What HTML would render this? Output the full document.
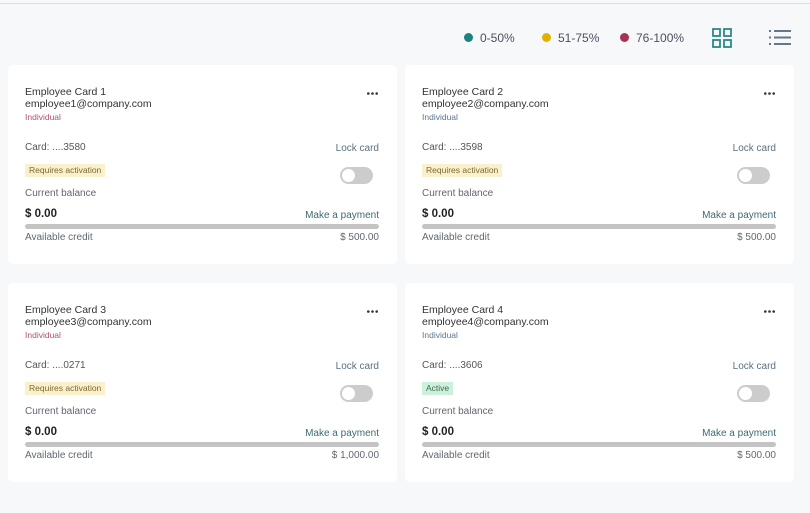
<!DOCTYPE html>
<html><head><style>
body{margin:0;width:810px;height:513px;background:#f7f8fa;font-family:"Liberation Sans",sans-serif;position:relative;overflow:hidden}
.top{position:absolute;left:0;top:3px;width:810px;height:1px;background:#dcdfe3}
.leg{position:absolute;top:31px;font-size:12px;color:#4a5060}
.dot{position:absolute;top:33px;width:9px;height:9px;border-radius:50%}
.card{position:absolute;width:389px;height:199px;background:#fff;border-radius:5px}
.card div{position:absolute;white-space:nowrap}
.t{left:17px;top:21px;font-size:10.5px;color:#333;line-height:12px}
.e{left:17px;top:33px;font-size:10.5px;color:#333}
.i{left:17px;top:47px;font-size:8.5px;color:#b0526e}
.c{left:17px;top:77px;font-size:10px;color:#555}
.l{right:18px;top:78px;font-size:10px;color:#5b7180}
.b{left:17px;top:99px;height:13px;padding:0 4px;font-size:8.5px;line-height:13px;color:#7a6a30;background:#fbf0cc}
.b.a{background:#cdf0dc;color:#3d6b4e}
.tg{left:332px;top:102px;width:33px;height:17px;border-radius:9px;background:#ccc}
.tg::after{content:"";position:absolute;left:2px;top:2px;width:13px;height:13px;border-radius:50%;background:#fff}
.cb{left:17px;top:123px;font-size:10px;color:#6a6070}
.v{left:17px;top:143px;font-size:11.5px;font-weight:bold;color:#222}
.m{right:18px;top:145px;font-size:10px;color:#3e6a72}
.bar{left:17px;top:159px;width:354px;height:5px;border-radius:3px;background:#c4c4c4}
.ac{left:17px;top:167px;font-size:10px;color:#606870}
.am{right:18px;top:167px;font-size:10px;color:#606870}
.dots{right:19px;top:27px}
</style></head><body>
<div class="top"></div>
<div class="dot" style="left:464px;background:#1a8380"></div><div class="leg" style="left:480px">0-50%</div>
<div class="dot" style="left:542px;background:#e2b000"></div><div class="leg" style="left:558px">51-75%</div>
<div class="dot" style="left:620px;background:#a83250"></div><div class="leg" style="left:636px">76-100%</div>
<svg style="position:absolute;left:712px;top:28px" width="20" height="20"><g fill="none" stroke="#2a8a86" stroke-width="1.8"><rect x="1" y="1" width="7" height="7"/><rect x="12" y="1" width="7" height="7"/><rect x="1" y="12" width="7" height="7"/><rect x="12" y="12" width="7" height="7"/></g></svg>
<svg style="position:absolute;left:769px;top:29px" width="22" height="17"><g stroke="#667788" stroke-width="2"><line x1="0" y1="2" x2="2" y2="2"/><line x1="5" y1="2" x2="22" y2="2"/><line x1="0" y1="8.5" x2="2" y2="8.5"/><line x1="5" y1="8.5" x2="22" y2="8.5"/><line x1="0" y1="15" x2="2" y2="15"/><line x1="5" y1="15" x2="22" y2="15"/></g></svg>

<div class="card" style="left:8px;top:65px"><div class="t">Employee Card 1</div><div class="e">employee1@company.com</div><div class="i">Individual</div><svg class="dots" style="position:absolute" width="11" height="3"><circle cx="1.3" cy="1.5" r="1.3" fill="#333"/><circle cx="5.5" cy="1.5" r="1.3" fill="#333"/><circle cx="9.7" cy="1.5" r="1.3" fill="#333"/></svg><div class="c">Card: ....3580</div><div class="l">Lock card</div><div class="b">Requires activation</div><div class="tg"></div><div class="cb">Current balance</div><div class="v">$ 0.00</div><div class="m">Make a payment</div><div class="bar"></div><div class="ac">Available credit</div><div class="am">$ 500.00</div></div>
<div class="card" style="left:405px;top:65px"><div class="t">Employee Card 2</div><div class="e">employee2@company.com</div><div class="i" style="color:#5a7590">Individual</div><svg class="dots" style="position:absolute" width="11" height="3"><circle cx="1.3" cy="1.5" r="1.3" fill="#333"/><circle cx="5.5" cy="1.5" r="1.3" fill="#333"/><circle cx="9.7" cy="1.5" r="1.3" fill="#333"/></svg><div class="c">Card: ....3598</div><div class="l">Lock card</div><div class="b">Requires activation</div><div class="tg"></div><div class="cb">Current balance</div><div class="v">$ 0.00</div><div class="m">Make a payment</div><div class="bar"></div><div class="ac">Available credit</div><div class="am">$ 500.00</div></div>
<div class="card" style="left:8px;top:283px"><div class="t">Employee Card 3</div><div class="e">employee3@company.com</div><div class="i">Individual</div><svg class="dots" style="position:absolute" width="11" height="3"><circle cx="1.3" cy="1.5" r="1.3" fill="#333"/><circle cx="5.5" cy="1.5" r="1.3" fill="#333"/><circle cx="9.7" cy="1.5" r="1.3" fill="#333"/></svg><div class="c">Card: ....0271</div><div class="l">Lock card</div><div class="b">Requires activation</div><div class="tg"></div><div class="cb">Current balance</div><div class="v">$ 0.00</div><div class="m">Make a payment</div><div class="bar"></div><div class="ac">Available credit</div><div class="am">$ 1,000.00</div></div>
<div class="card" style="left:405px;top:283px"><div class="t">Employee Card 4</div><div class="e">employee4@company.com</div><div class="i" style="color:#5a7590">Individual</div><svg class="dots" style="position:absolute" width="11" height="3"><circle cx="1.3" cy="1.5" r="1.3" fill="#333"/><circle cx="5.5" cy="1.5" r="1.3" fill="#333"/><circle cx="9.7" cy="1.5" r="1.3" fill="#333"/></svg><div class="c">Card: ....3606</div><div class="l">Lock card</div><div class="b a">Active</div><div class="tg"></div><div class="cb">Current balance</div><div class="v">$ 0.00</div><div class="m">Make a payment</div><div class="bar"></div><div class="ac">Available credit</div><div class="am">$ 500.00</div></div>
</body></html>
